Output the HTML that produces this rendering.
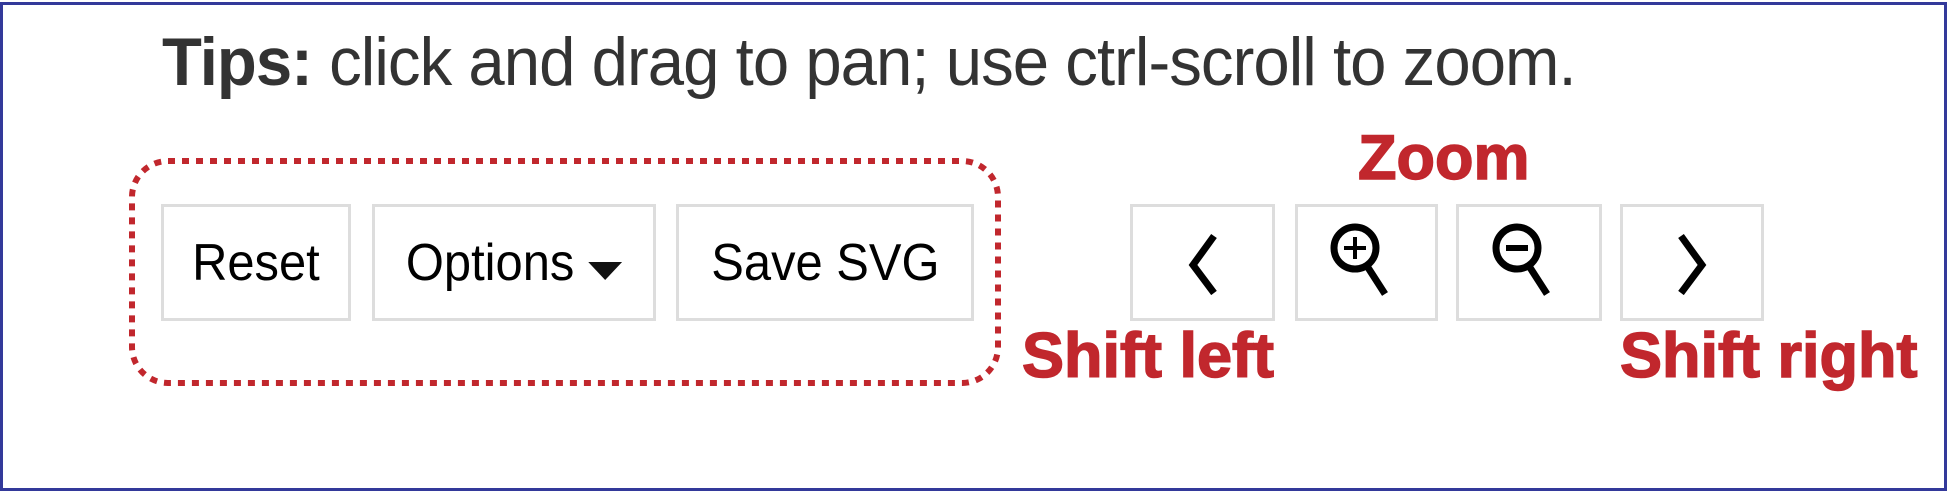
<!DOCTYPE html>
<html><head><meta charset="utf-8"><style>
html,body{margin:0;padding:0;background:#fff;width:1958px;height:495px;overflow:hidden;font-family:"Liberation Sans",Arial,sans-serif;}
.frame{position:absolute;left:0;top:2px;width:1941px;height:483px;border:3px solid #33399a;}
.tips{position:absolute;left:162px;top:23px;font-size:68px;color:#333;white-space:nowrap;letter-spacing:-1px;transform:scaleX(0.96);transform-origin:0 0;}
.tips b{font-weight:bold;}
.dots{position:absolute;left:128px;top:157px;}
.btn{position:absolute;top:204px;height:117px;border:3px solid #ddd;box-sizing:border-box;background:#fff;font-size:52px;color:#000;display:flex;align-items:center;justify-content:center;}
.btn span{display:inline-block;transform:scaleX(0.94);white-space:nowrap;}
.lbl{position:absolute;color:#c1272d;font-weight:bold;font-size:63px;white-space:nowrap;-webkit-text-stroke:1.5px #c1272d;}
</style></head><body>
<div class="frame"></div>
<div class="tips"><b>Tips:</b> click and drag to pan; use ctrl-scroll to zoom.</div>
<svg class="dots" width="876" height="232" viewBox="0 0 876 232"><rect x="4" y="4" width="866" height="222" rx="36" fill="none" stroke="#c1272d" stroke-width="6" stroke-dasharray="7 7"/></svg>
<div class="btn" style="left:161px;width:190px"><span>Reset</span></div>
<div class="btn" style="left:372px;width:284px"><span>Options&nbsp;<svg width="36" height="22" viewBox="0 0 36 22"><path d="M0 4 L36 4 L18 22 Z" fill="#111"/></svg></span></div>
<div class="btn" style="left:676px;width:298px"><span>Save SVG</span></div>
<div class="lbl" style="left:1358px;top:122px">Zoom</div>
<div class="btn" style="left:1130px;width:145px"><svg width="44" height="64" viewBox="0 0 44 64"><path d="M33 5 L12 34 L33 62" fill="none" stroke="#000" stroke-width="7"/></svg></div>
<div class="btn" style="left:1295px;width:143px"><svg width="80" height="90" viewBox="0 0 80 90"><circle cx="28" cy="30" r="21" fill="none" stroke="#000" stroke-width="7"/><path d="M28 19 V41 M17 30 H39" stroke="#000" stroke-width="4"/><path d="M40 48 L58 76" stroke="#000" stroke-width="7"/></svg></div>
<div class="btn" style="left:1456px;width:146px"><svg width="80" height="90" viewBox="0 0 80 90"><circle cx="28" cy="30" r="21" fill="none" stroke="#000" stroke-width="7"/><path d="M17 30 H39" stroke="#000" stroke-width="6"/><path d="M40 48 L58 76" stroke="#000" stroke-width="7"/></svg></div>
<div class="btn" style="left:1620px;width:144px"><svg width="44" height="64" viewBox="0 0 44 64"><path d="M11 5 L32 34 L11 62" fill="none" stroke="#000" stroke-width="7"/></svg></div>
<div class="lbl" style="left:1022px;top:320px">Shift left</div>
<div class="lbl" style="left:1620px;top:320px">Shift right</div>
</body></html>
